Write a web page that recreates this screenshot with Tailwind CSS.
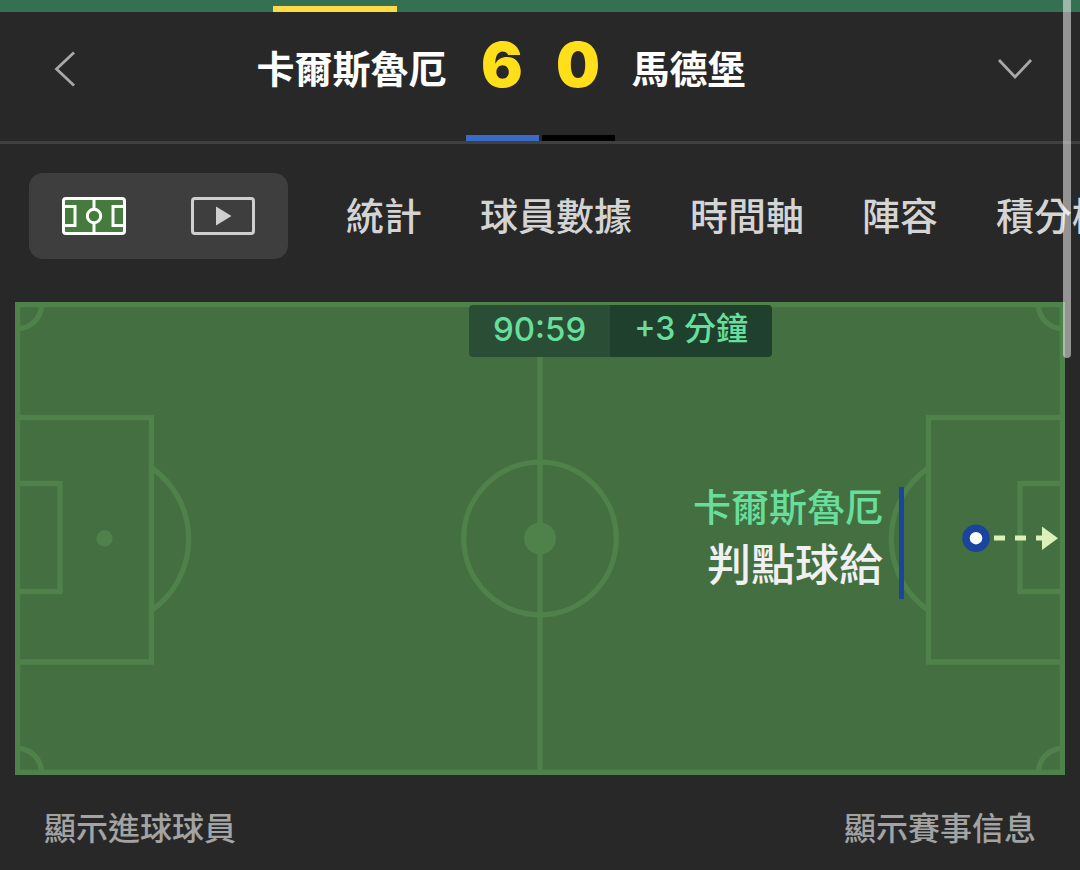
<!DOCTYPE html>
<html lang="zh-Hant">
<head>
  <meta charset="UTF-8">
  <meta name="viewport" content="width=device-width, initial-scale=1.0">
  <title>卡爾斯魯厄 6 - 0 馬德堡</title>
  <script src="https://cdn.jsdelivr.net/npm/@tailwindcss/browser@4"></script>
</head>
<body class="relative min-h-screen overflow-x-hidden bg-[#282828] font-['Inter','Noto_Sans_CJK_TC',sans-serif]">
  <!-- Top strip -->
  <div class="flex h-3 items-end bg-[#367053]">
    <div class="ml-[273px] h-1.5 w-[124px] bg-[#fddc45]"></div>
  </div>

  <!-- Score header -->
  <header class="grid h-[132px] grid-cols-[1fr_auto_1fr] border-b-3 border-[#404040]">
    <div class="flex h-[114px] items-center justify-between pr-[19px] pl-[53px]">
      <button type="button" aria-label="返回" class="text-[#a8a8a8]">
        <svg class="h-9 w-6" viewBox="0 0 24 36" fill="none" stroke="currentColor" stroke-width="2.8">
          <path d="M21 1.500 L3.500 18 L21 34.500"/>
        </svg>
      </button>
      <span class="text-[38px] leading-[56px] font-bold text-white">卡爾斯魯厄</span>
    </div>
    <div class="flex gap-[3px] text-center text-[62px] leading-[106px] font-black text-[#ffde1a]">
      <div class="w-[73px] border-b-6 border-[#3a6bc9]">6</div>
      <div class="w-[73px] border-b-6 border-black">0</div>
    </div>
    <div class="flex h-[114px] items-center justify-between pr-[47px] pl-[17px]">
      <span class="text-[38px] leading-[56px] font-bold text-white">馬德堡</span>
      <button type="button" aria-label="展開" class="text-[#a8a8a8]">
        <svg class="h-6 w-9" viewBox="0 0 36 24" fill="none" stroke="currentColor" stroke-width="2.8">
          <path d="M2 3 L18 20 L34 3"/>
        </svg>
      </button>
    </div>
  </header>

  <!-- Tabs -->
  <nav class="flex items-center gap-[58px] overflow-hidden pt-[29px] pb-[43px] pl-[29px] text-[38px] leading-[56px] font-medium whitespace-nowrap text-[#d4d4d4]">
    <div class="grid h-[86px] w-[259px] shrink-0 grid-cols-2 rounded-[14px] bg-[#3e3e3e]">
      <button type="button" aria-label="球場" class="flex items-center justify-center">
        <svg class="h-[38px] w-16" viewBox="0 0 64 38" fill="none" stroke="#fff" stroke-width="3">
          <rect x="1.500" y="1.500" width="61" height="35" rx="2.500" fill="#457b3c"/>
          <path d="M32 1 V12 M32 26 V37 M2 9.500 H13 V28.500 H2 M62 9.500 H51 V28.500 H62"/>
          <circle cx="32" cy="19" r="6.700"/>
        </svg>
      </button>
      <button type="button" aria-label="影片" class="flex items-center justify-center">
        <svg class="h-[38px] w-16" viewBox="0 0 64 38">
          <rect x="1.500" y="1.500" width="61" height="35" rx="2.500" fill="none" stroke="#cfcfcf" stroke-width="3"/>
          <path d="M25 9.500 L40.500 19 L25 28.500 Z" fill="#cfcfcf"/>
        </svg>
      </button>
    </div>
    <button type="button" class="shrink-0">統計</button>
    <button type="button" class="shrink-0">球員數據</button>
    <button type="button" class="shrink-0">時間軸</button>
    <button type="button" class="shrink-0">陣容</button>
    <button type="button" class="shrink-0">積分榜</button>
  </nav>

  <!-- Pitch -->
  <main class="relative mx-[15px]">
    <svg class="block w-full" viewBox="0 0 1050 473" fill="none" stroke="#4f814b" stroke-width="5.300">
      <rect x="2.650" y="2.650" width="1044.700" height="467.700" fill="#446f41"/>
      <path d="M525 3 V470"/>
      <circle cx="525" cy="236.500" r="76.300"/>
      <circle cx="525" cy="236.500" r="16" fill="#4f814b" stroke="none"/>
      <!-- left side -->
      <path d="M3 115.500 H136.500 V360 H3"/>
      <path d="M3 181.500 H45 V289.500 H3"/>
      <path d="M137 166 A87 87 0 0 1 137 308"/>
      <circle cx="89.500" cy="236.500" r="8.200" fill="#4f814b" stroke="none"/>
      <!-- right side -->
      <path d="M1047 115.500 H913.500 V360 H1047"/>
      <path d="M1047 181.500 H1005 V289.500 H1047"/>
      <path d="M913 166 A87 87 0 0 0 913 308"/>
      <!-- corners -->
      <path d="M26.500 4 A24 24 0 0 1 4 26.500 M4 446.500 A24 24 0 0 1 26.500 469 M1023.500 4 A24 24 0 0 0 1046 26.500 M1046 446.500 A24 24 0 0 0 1023.500 469"/>
      <!-- penalty -->
      <path d="M979 236 H1030" stroke="#daf2b8" stroke-width="5" stroke-dasharray="11 10"/>
      <path d="M1027 224.500 L1043 236.200 L1027 248 Z" fill="#daf2b8" stroke="none"/>
      <circle cx="961" cy="236.200" r="10" fill="#fff" stroke="#1b449f" stroke-width="7.500"/>
    </svg>

    <div class="absolute top-[3px] left-[454px] flex leading-[48px] font-medium text-[#68de9c]">
      <span class="rounded-l-sm bg-[#294e35] px-6 pb-1 text-[33px]">90:59</span>
      <span class="rounded-r-sm bg-[#1f402c] px-6 pb-1 text-[32px]">+3 分鐘</span>
    </div>

    <div class="absolute top-[185px] right-[161px] border-r-5 border-[#1b449f] pr-4 text-right font-medium">
      <p class="text-[38px] leading-10 text-[#68de9c]">卡爾斯魯厄</p>
      <p class="pt-1 text-[44px] leading-[68px] text-[#f0f0f0]">判點球給</p>
    </div>
  </main>

  <footer class="flex justify-between px-11 pt-[29px] text-[32px] leading-[50px] font-medium text-[#a3a3a3]">
    <button type="button">顯示進球球員</button>
    <button type="button">顯示賽事信息</button>
  </footer>

  <!-- Scroll indicator -->
  <div class="absolute top-0 right-[9px] h-[358px] w-2 rounded-b-full bg-white/50"></div>
</body>
</html>
